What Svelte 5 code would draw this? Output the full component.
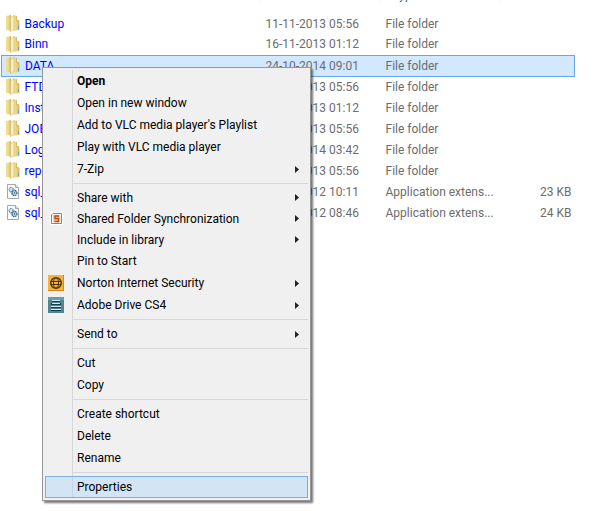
<script>
    const files = [
        { name: 'Backup', date: '11-11-2013 05:56', type: 'File folder' },
        { name: 'Binn', date: '16-11-2013 01:12', type: 'File folder' },
        { name: 'DATA', date: '24-10-2014 09:01', type: 'File folder' },
        { name: 'FTD', date: '16-11-2013 05:56', type: 'File folder' },
        { name: 'Inst', date: '16-11-2013 01:12', type: 'File folder' },
        { name: 'JOB', date: '11-11-2013 05:56', type: 'File folder' },
        { name: 'Log', date: '24-10-2014 03:42', type: 'File folder' },
        { name: 'rep', date: '11-11-2013 05:56', type: 'File folder' },
        { name: 'sql_', date: '11-02-2012 10:11', type: 'Application extens...', size: '23 KB' },
        { name: 'sql_', date: '11-02-2012 08:46', type: 'Application extens...', size: '24 KB' }
    ];

    // One array per block; a divider goes between blocks.
    const groups = [
        [
            { label: 'Open', bold: true },
            { label: 'Open in new window' },
            { label: "Add to VLC media player's Playlist" },
            { label: 'Play with VLC media player' },
            { label: '7-Zip', sub: true }
        ],
        [
            { label: 'Share with', sub: true, tight: true },
            { label: 'Shared Folder Synchronization', sub: true, tight: true, icon: 'sync' },
            { label: 'Include in library', sub: true, tight: true },
            { label: 'Pin to Start' },
            { label: 'Norton Internet Security', sub: true, icon: 'norton' },
            { label: 'Adobe Drive CS4', sub: true, icon: 'adobe' }
        ],
        [{ label: 'Send to', sub: true }],
        [{ label: 'Cut' }, { label: 'Copy' }],
        [{ label: 'Create shortcut' }, { label: 'Delete' }, { label: 'Rename' }],
        [{ label: 'Properties' }]
    ];

    let selected = $state(2);
    let active = $state('Properties');
</script>

<main>
    <table>
        <colgroup>
            <col class="c-name" />
            <col class="c-date" />
            <col class="c-type" />
            <col class="c-size" />
        </colgroup>
        <thead>
            <tr>
                <th scope="col" aria-label="Name"></th>
                <th scope="col" aria-label="Date modified"><div class="head"></div></th>
                <th scope="col"><div class="head">Type</div></th>
                <th scope="col" aria-label="Size"><div class="head"></div></th>
            </tr>
        </thead>
        <tbody>
            {#each files as file, i}
                <tr class:selected={i === selected} onclick={() => (selected = i)}>
                    <td>
                        <div class="name">
                            {#if file.size}
                                <svg width="14" height="17" viewBox="0 0 14 17" aria-hidden="true">
                                    <path d="M1.500 1.500h8l3 3v11h-11z" fill="#fbfcfd" stroke="#a4a8ad" />
                                    <path d="M9.500 1.500v3h3" fill="#e4e7ea" stroke="#a4a8ad" />
                                    <path d="M3.500 8l4 4M6.500 5l4 3.500" stroke="#7fa9c8" />
                                    <circle cx="5" cy="6.500" r="2" fill="#d4e7f4" stroke="#3d6d93" stroke-dasharray="1.300 .5" />
                                    <circle cx="8.500" cy="10" r="2.500" fill="#c4dced" stroke="#2d5f88" stroke-width="1.200" stroke-dasharray="1.500 .5" />
                                    <circle cx="8.500" cy="10" r=".8" fill="#25557c" />
                                </svg>
                            {:else}
                                <svg width="14" height="17" viewBox="0 0 14 17" aria-hidden="true">
                                    <defs>
                                        <linearGradient id="fold-left" x2="1">
                                            <stop offset="0" stop-color="#f3e19b" />
                                            <stop offset=".6" stop-color="#ecd582" />
                                            <stop offset="1" stop-color="#cfae4c" />
                                        </linearGradient>
                                        <linearGradient id="fold-right" x2="1">
                                            <stop offset="0" stop-color="#f5e6a6" />
                                            <stop offset="1" stop-color="#dfc263" />
                                        </linearGradient>
                                    </defs>
                                    <path d="M0 1l5-1v15.500L0 15z" fill="url(#fold-left)" />
                                    <path d="M7 .5h3.500V5l2.500.5V15l-6 1z" fill="url(#fold-right)" />
                                    <path d="M4.500 3L8 .5V14l-3.500 2.500z" fill="#fcf3cb" stroke="#cdb25c" stroke-width=".6" />
                                    <path d="M10.500 1v4.500l2.500.5v9" fill="none" stroke="#c9aa4b" stroke-width=".7" />
                                    <path d="M12.500 11v3" stroke="#57a8d8" />
                                </svg>
                            {/if}
                            <a href="#{file.name}">{file.name}</a>
                        </div>
                    </td>
                    <td>{file.date}</td>
                    <td>{file.type}</td>
                    <td class="size">{file.size ?? ''}</td>
                </tr>
            {/each}
        </tbody>
    </table>

    <div class="menu" role="menu">
        {#each groups as group, i}
            {#if i > 0}
                <div class="divider" role="separator"></div>
            {/if}
            {#each group as item}
                <button
                    type="button"
                    role="menuitem"
                    class:bold={item.bold}
                    class:tight={item.tight}
                    class:active={item.label === active}
                    onmouseenter={() => (active = item.label)}
                >
                    <span class="icon">
                        {#if item.icon === 'sync'}
                            <svg width="13" height="13" viewBox="0 0 13 13" aria-hidden="true">
                                <path d="M0 0h13v13H0z" fill="#fff" />
                                <path d="M3 1.500h8.500v10h-10V3z" fill="#fff" stroke="#e8651a" />
                                <path d="M3 3h7v7H3z" fill="#fbc88f" />
                                <path d="M9 4H5v2.500h3.500V9.500H4.500" fill="none" stroke="#b8480c" stroke-width="1.300" />
                            </svg>
                        {:else if item.icon === 'norton'}
                            <svg width="16" height="16" viewBox="0 0 16 16" aria-hidden="true">
                                <path d="M0 0h16v16H0z" fill="#f7b13c" />
                                <path d="M0 15.500h15.500V0" fill="none" stroke="#d98512" />
                                <g fill="none" stroke="#4a3508">
                                    <circle cx="8" cy="8" r="5.300" stroke-width="1.400" />
                                    <ellipse cx="8" cy="8" rx="2.500" ry="5.300" />
                                    <path d="M3 6.500h10M3 9.500h10" />
                                </g>
                            </svg>
                        {:else if item.icon === 'adobe'}
                            <svg width="16" height="16" viewBox="0 0 16 16" aria-hidden="true">
                                <path d="M0 0h16v16H0z" fill="#4f8592" />
                                <path d="M0 0h16v3H0z" fill="#6b9da8" />
                                <path d="M4 3h8v2H4zM3 6h10v2H3zM3 9h10v2H3zM3 12h10v2H3z" fill="#173c4a" />
                                <path d="M4 3.500h8M4 6.500h8M3 9.500h10M3 12.500h10" stroke="#d8e8ec" />
                            </svg>
                        {/if}
                    </span>
                    <span class="label">{item.label}</span>
                    {#if item.sub}
                        <svg class="arrow" width="4" height="7" viewBox="0 0 4 7" aria-hidden="true">
                            <path d="M0 0l4 3.500L0 7z" fill="#222" />
                        </svg>
                    {/if}
                </button>
            {/each}
        {/each}
    </div>
</main>

<style>
    :global(body) {
        margin: 0;
        background: #fff;
    }

    main {
        position: relative;
        min-height: 100vh;
        padding: 0 25px 0 1px;
        box-sizing: border-box;
        font-family: Roboto, 'Noto Sans', sans-serif;
        font-size: 12px;
        line-height: 16px;
    }

    table {
        width: 100%;
        table-layout: fixed;
        border-collapse: collapse;
        color: #6d6d6d;
    }

    .c-name {
        width: 257px;
    }

    .c-date,
    .c-type {
        width: 120px;
    }

    th {
        height: 13px;
        padding: 0;
        font-weight: normal;
        text-align: left;
        vertical-align: top;
        color: #4c607a;
    }

    /* The list is scrolled so that only the foot of the header shows. */
    .head {
        display: flex;
        align-items: flex-end;
        height: 3px;
        padding-left: 13px;
        border-left: 1px solid #f0f2f5;
        overflow: hidden;
    }

    td {
        height: 21px;
        padding: 0 0 0 7px;
        box-sizing: border-box;
        white-space: nowrap;
        overflow: hidden;
    }

    td:first-child {
        padding-left: 4px;
    }

    .size {
        padding: 0 3px 0 0;
        text-align: right;
    }

    .selected {
        background: #d1e8ff;
        border: 1px solid #66a7e8;
    }

    .name {
        display: flex;
        align-items: center;
        gap: 5px;
    }

    .name a {
        color: #00f;
        text-decoration: none;
    }

    .menu {
        position: absolute;
        top: 67px;
        left: 42px;
        width: 269px;
        box-sizing: border-box;
        padding: 2px;
        border: 1px solid #979797;
        background: linear-gradient(#d7d7d7, #d7d7d7) 29px 2px / 1px calc(100% - 4px) no-repeat #f0f0f0;
        box-shadow: 2px 2px 2px #0000008c;
    }

    .divider {
        height: 1px;
        margin: 3px 0 3px 28px;
        background: #d7d7d7;
    }

    .menu button {
        display: flex;
        align-items: center;
        width: 100%;
        height: 22px;
        box-sizing: border-box;
        padding: 0 8px 0 2px;
        border: 1px solid transparent;
        background: none;
        font: inherit;
        color: #000;
        text-align: left;
        white-space: nowrap;
    }

    .menu button.tight {
        height: 21px;
    }

    .menu button.bold {
        font-weight: bold;
    }

    .menu button.active {
        border-color: #78aee5;
        background: #a8d2fa66;
    }

    .icon {
        display: flex;
        justify-content: center;
        width: 16px;
        margin-right: 13px;
    }

    .label {
        flex: 1;
    }
</style>
